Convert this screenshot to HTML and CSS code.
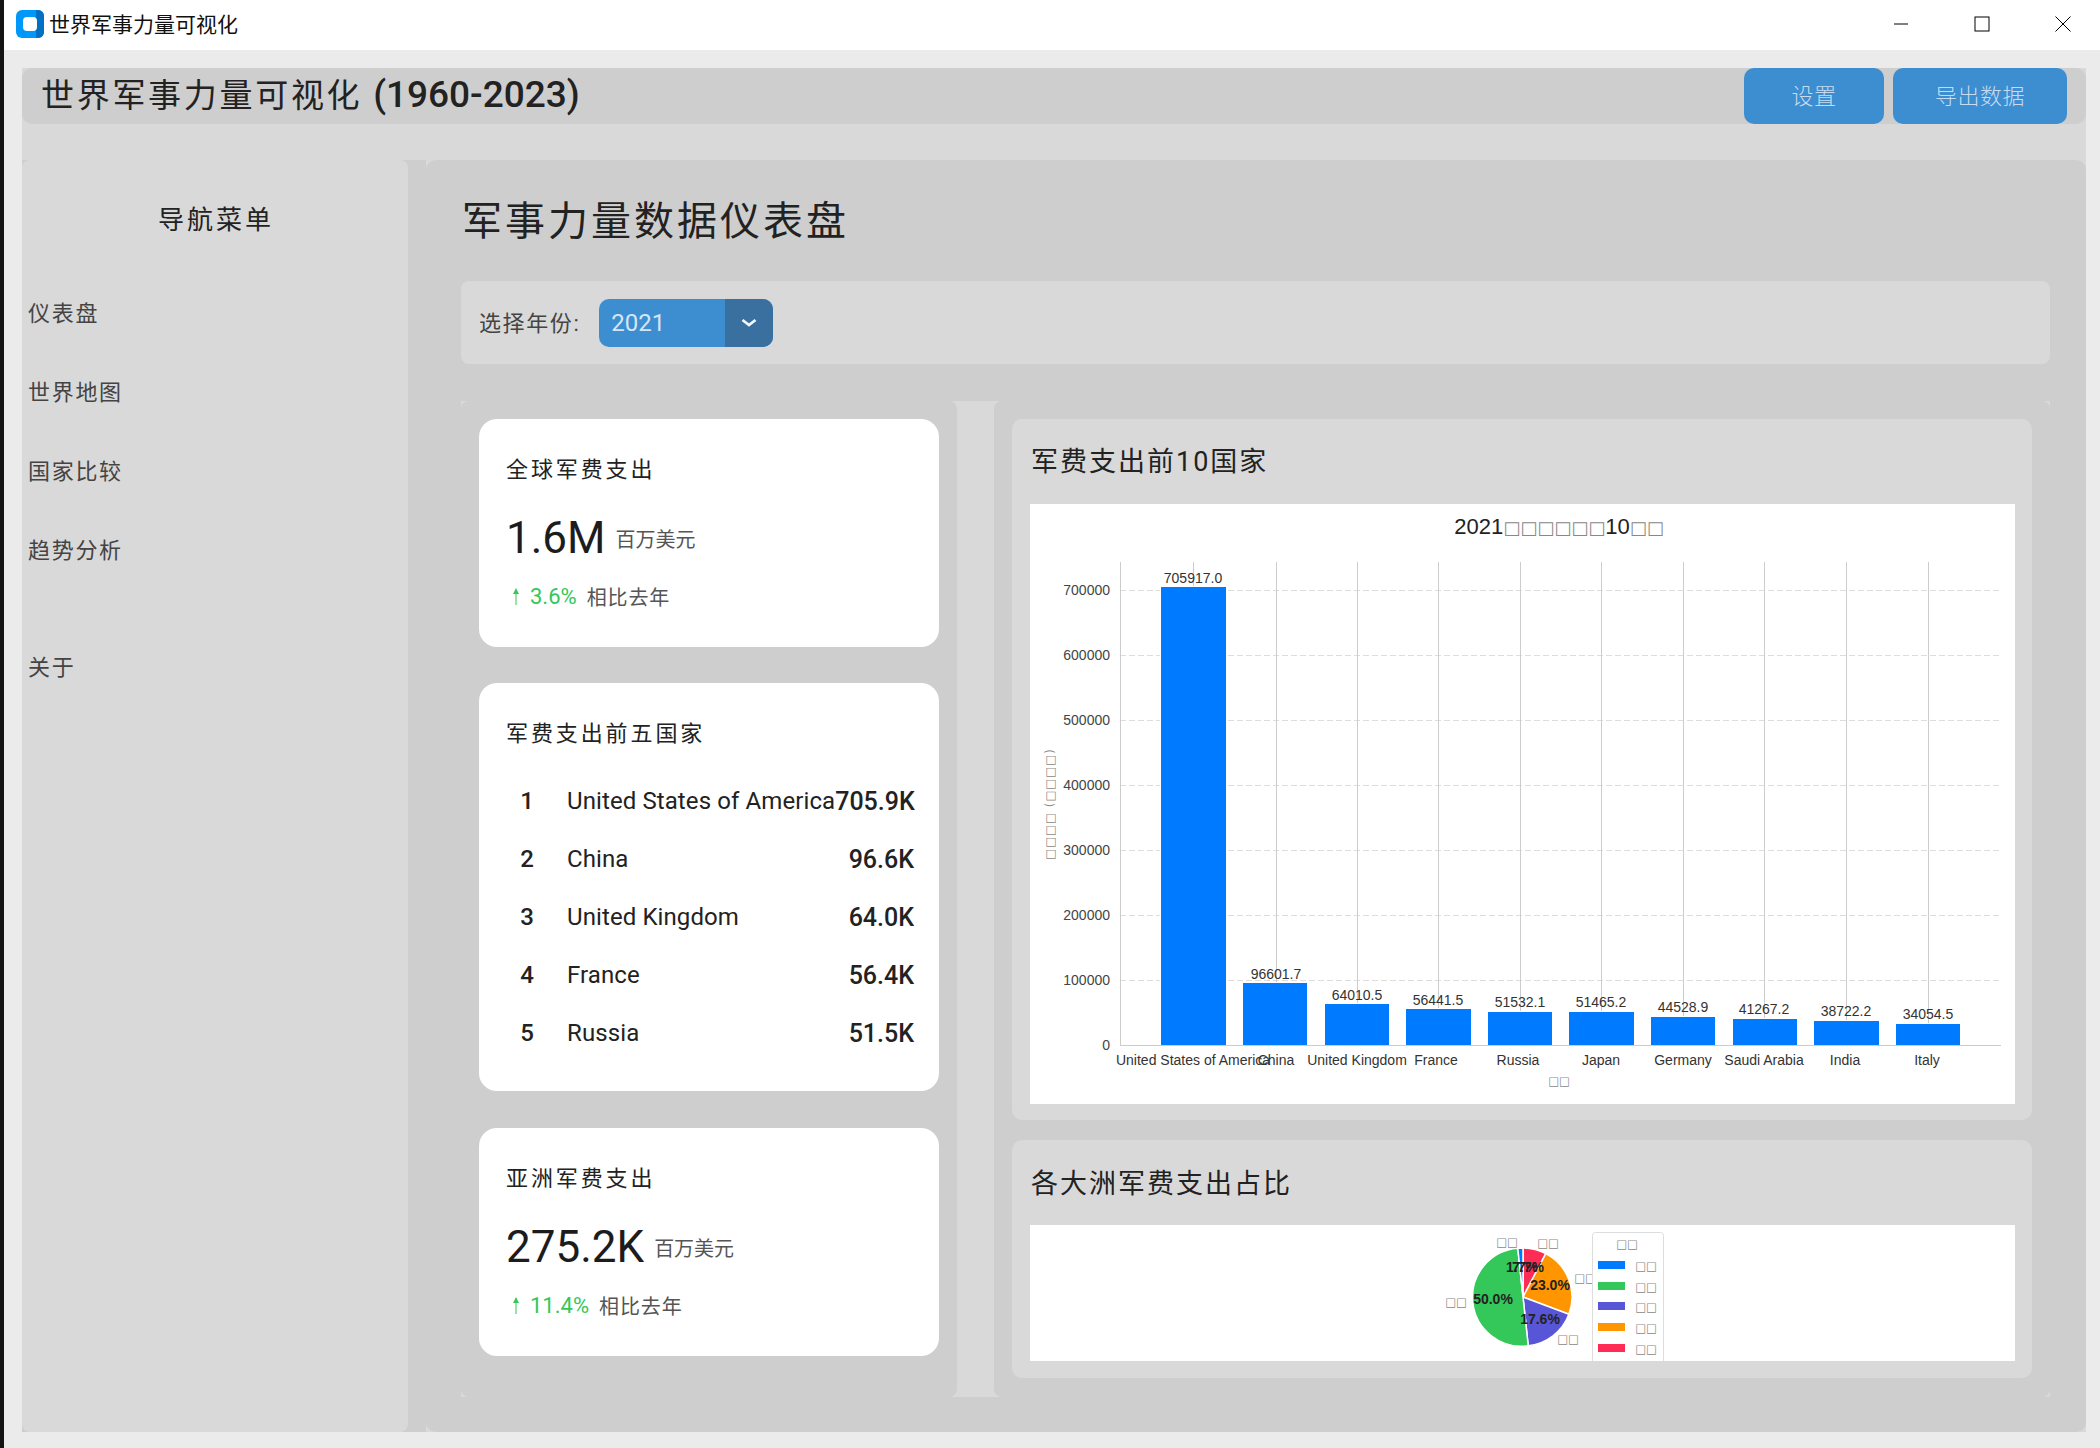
FILE: index.html
```html
<!DOCTYPE html>
<html lang="zh-CN">
<head>
    <meta charset="UTF-8">
    <title>世界军事力量可视化</title>
    <link rel="stylesheet" href="styles.css">
</head>
<body>
    <div class="edge"></div>
    <div class="window">
        <div class="titlebar">
            <svg class="app-icon" width="28" height="28" viewBox="0 0 28 28">
                <rect width="28" height="28" rx="6" fill="#0098f8"/>
                <path d="M22 0a6 6 0 0 1 6 6v16a6 6 0 0 1-6 6h-2V0z" fill="#0070c4"/>
                <rect x="7" y="7" width="14" height="14" rx="4" fill="#fff"/>
            </svg>
            <span class="app-name">世界军事力量可视化</span>
            <div class="win-controls">
                <svg width="16" height="16" viewBox="0 0 16 16"><path d="M1 8h14" stroke="#000" stroke-width="1"/></svg>
                <svg width="16" height="16" viewBox="0 0 16 16"><rect x="1" y="1" width="14" height="14" fill="none" stroke="#000" stroke-width="1"/></svg>
                <svg width="16" height="16" viewBox="0 0 16 16"><path d="M0.500 0.500l15 15M15.500 0.500l-15 15" stroke="#000" stroke-width="1"/></svg>
            </div>
        </div>

        <div class="content">
            <div class="shell">
                <div class="topbar">
                    <h1 class="app-title">世界军事力量可视化 <span>(1960-2023)</span></h1>
                    <div class="top-actions">
                        <button class="btn btn-settings">设置</button>
                        <button class="btn btn-export">导出数据</button>
                    </div>
                </div>

                <div class="body-row">
                    <div class="side-wrap">
                        <nav class="sidebar">
                            <h2 class="side-title">导航菜单</h2>
                            <a class="nav-item">仪表盘</a>
                            <a class="nav-item">世界地图</a>
                            <a class="nav-item">国家比较</a>
                            <a class="nav-item">趋势分析</a>
                            <a class="nav-item nav-about">关于</a>
                        </nav>
                    </div>

                    <main class="main">
                        <h2 class="page-title">军事力量数据仪表盘</h2>

                        <div class="year-bar">
                            <span class="year-label">选择年份:</span>
                            <div class="combo">
                                <span class="combo-value">2021</span>
                                <span class="combo-arrow">
                                    <svg width="16" height="10" viewBox="0 0 16 10"><path d="M1.500 2l6.500 5 6.500-5" fill="none" stroke="#f2f6fa" stroke-width="2.800"/></svg>
                                </span>
                            </div>
                        </div>

                        <div class="panes">
                            <div class="pane pane-left">
                                <section class="card">
                                    <h3 class="card-title">全球军费支出</h3>
                                    <div class="stat-row"><span class="stat-value">1.6M</span><span class="stat-unit">百万美元</span></div>
                                    <div class="change-row">
                                        <svg width="8" height="17" viewBox="0 0 8 17"><path d="M4 0L7 6H4.500V17H3.500V6H1z" fill="#34c759"/></svg>
                                        <span class="change-pct">3.6%</span>
                                        <span class="change-note">相比去年</span>
                                    </div>
                                </section>

                                <section class="card card-list">
                                    <h3 class="card-title">军费支出前五国家</h3>
                                    <ol class="rank-list">
                                        <li><b class="rank">1</b><span class="country">United States of America</span><b class="amount">705.9K</b></li>
                                        <li><b class="rank">2</b><span class="country">China</span><b class="amount">96.6K</b></li>
                                        <li><b class="rank">3</b><span class="country">United Kingdom</span><b class="amount">64.0K</b></li>
                                        <li><b class="rank">4</b><span class="country">France</span><b class="amount">56.4K</b></li>
                                        <li><b class="rank">5</b><span class="country">Russia</span><b class="amount">51.5K</b></li>
                                    </ol>
                                </section>

                                <section class="card card-asia">
                                    <h3 class="card-title">亚洲军费支出</h3>
                                    <div class="stat-row"><span class="stat-value">275.2K</span><span class="stat-unit">百万美元</span></div>
                                    <div class="change-row">
                                        <svg width="8" height="17" viewBox="0 0 8 17"><path d="M4 0L7 6H4.500V17H3.500V6H1z" fill="#34c759"/></svg>
                                        <span class="change-pct">11.4%</span>
                                        <span class="change-note">相比去年</span>
                                    </div>
                                </section>
                            </div>

                            <div class="splitter"></div>

                            <div class="pane pane-right">
                                <section class="chart-card">
                                    <h3 class="chart-title">军费支出前10国家</h3>
                                    <div class="plot plot-bar">
                                        <svg class="chart" width="985" height="600" viewBox="0 0 985 600">
                                            <text class="c-title" x="529" y="30">2021<tspan class="tofu">□□□□□□</tspan>10<tspan class="tofu">□□</tspan></text>

                                            <g class="dash">
                                                <path d="M90 86H971"/><path d="M90 151H971"/><path d="M90 216H971"/><path d="M90 281H971"/>
                                                <path d="M90 346H971"/><path d="M90 411H971"/><path d="M90 476H971"/>
                                            </g>
                                            <g class="vline">
                                                <path d="M163 58V541"/><path d="M246 58V541"/><path d="M327 58V541"/><path d="M408 58V541"/><path d="M490 58V541"/>
                                                <path d="M571 58V541"/><path d="M653 58V541"/><path d="M734 58V541"/><path d="M816 58V541"/><path d="M898 58V541"/>
                                            </g>
                                            <g class="bars">
                                                <rect x="131" y="83" width="65" height="458"/>
                                                <rect x="213" y="479" width="64" height="62"/>
                                                <rect x="295" y="500" width="64" height="41"/>
                                                <rect x="376" y="505" width="65" height="36"/>
                                                <rect x="458" y="508" width="64" height="33"/>
                                                <rect x="539" y="508" width="65" height="33"/>
                                                <rect x="621" y="513" width="64" height="28"/>
                                                <rect x="703" y="515" width="64" height="26"/>
                                                <rect x="784" y="517" width="65" height="24"/>
                                                <rect x="866" y="520" width="64" height="21"/>
                                            </g>
                                            <path class="axis" d="M90 58V541H971"/>

                                            <g class="ticks">
                                                <text x="80" y="91">700000</text><text x="80" y="156">600000</text><text x="80" y="221">500000</text>
                                                <text x="80" y="286">400000</text><text x="80" y="351">300000</text><text x="80" y="416">200000</text>
                                                <text x="80" y="481">100000</text><text x="80" y="546">0</text>
                                            </g>
                                            <g class="vals">
                                                <text x="163" y="79">705917.0</text><text x="246" y="475">96601.7</text><text x="327" y="496">64010.5</text>
                                                <text x="408" y="501">56441.5</text><text x="490" y="503">51532.1</text><text x="571" y="503">51465.2</text>
                                                <text x="653" y="508">44528.9</text><text x="734" y="510">41267.2</text><text x="816" y="512">38722.2</text>
                                                <text x="898" y="515">34054.5</text>
                                            </g>
                                            <g class="cats">
                                                <text x="163" y="561">United States of America</text><text x="246" y="561">China</text><text x="327" y="561">United Kingdom</text>
                                                <text x="406" y="561">France</text><text x="488" y="561">Russia</text><text x="571" y="561">Japan</text>
                                                <text x="653" y="561">Germany</text><text x="734" y="561">Saudi Arabia</text><text x="815" y="561">India</text>
                                                <text x="897" y="561">Italy</text>
                                            </g>
                                            <text class="axis-name" x="529" y="581">□□</text>
                                            <text class="axis-name y-name" transform="translate(24 300) rotate(-90)">□□□□ (□□□□)</text>
                                        </svg>
                                    </div>
                                </section>

                                <section class="chart-card chart-card-pie">
                                    <h3 class="chart-title">各大洲军费支出占比</h3>
                                    <div class="plot plot-pie">
                                        <svg class="chart" width="985" height="136" viewBox="0 0 985 136">
                                            <g class="slices">
                                                <path fill="#ff2d55" d="M493 72L493 23A49 49 0 0 1 515.800 28.600Z"/>
                                                <path fill="#ff9500" d="M493 72L515.800 28.600A49 49 0 0 1 538.900 89.200Z"/>
                                                <path fill="#5856d6" d="M493 72L538.900 89.200A49 49 0 0 1 498.200 120.700Z"/>
                                                <path fill="#34c759" d="M493 72L498.200 120.700A49 49 0 1 1 487.800 23.300Z"/>
                                                <path fill="#007aff" d="M493 72L487.800 23.300A49 49 0 0 1 493 23Z"/>
                                            </g>
                                            <g class="pcts">
                                                <text x="492" y="47">1.7%</text><text x="498" y="47">7.7%</text><text x="520" y="65">23.0%</text>
                                                <text x="510" y="99">17.6%</text><text x="463" y="79">50.0%</text>
                                            </g>
                                            <g class="axis-name">
                                                <text x="477" y="21">□□</text><text x="518" y="22">□□</text><text x="555" y="57">□□</text>
                                                <text x="538" y="118">□□</text><text x="426" y="81">□□</text>
                                            </g>
                                            <rect class="legend-box" x="562.500" y="7.500" width="71" height="140" rx="3"/>
                                            <text class="axis-name" x="597" y="23">□□</text>
                                            <rect x="568" y="36" width="27" height="8" fill="#007aff"/>
                                            <rect x="568" y="57" width="27" height="8" fill="#34c759"/>
                                            <rect x="568" y="77" width="27" height="8" fill="#5856d6"/>
                                            <rect x="568" y="98" width="27" height="8" fill="#ff9500"/>
                                            <rect x="568" y="119" width="27" height="8" fill="#ff2d55"/>
                                            <g class="axis-name">
                                                <text x="616" y="45">□□</text><text x="616" y="66">□□</text><text x="616" y="86">□□</text>
                                                <text x="616" y="107">□□</text><text x="616" y="128">□□</text>
                                            </g>
                                        </svg>
                                    </div>
                                </section>
                            </div>
                        </div>
                    </main>
                </div>
            </div>
        </div>
    </div>
</body>
</html>
```

FILE: styles.css
```css
* { margin: 0; padding: 0; box-sizing: border-box; }

body {
    width: 2100px;
    height: 1448px;
    display: flex;
    overflow: hidden;
    background: #ebebeb;
    color: #222;
    font-family: Roboto, "Noto Sans CJK SC", sans-serif;
}

.edge {
    width: 4px;
    background: #141414;
}

.window {
    flex: 1;
    display: flex;
    flex-direction: column;
    min-width: 0;
}

/* Title bar */
.titlebar {
    height: 50px;
    display: flex;
    align-items: center;
    background: #fff;
    padding: 0 0 2px 12px;
}

.app-name {
    margin: 0 0 2px 5px;
    font-size: 21px;
    color: #111;
    font-family: "Noto Sans CJK SC", sans-serif;
}

.win-controls {
    margin-left: auto;
    display: flex;
    gap: 65px;
    padding-right: 29px;
}

/* Shell */
.content {
    flex: 1;
    padding: 18px 14px 16px 18px;
    display: flex;
    min-height: 0;
}

.shell {
    flex: 1;
    display: flex;
    flex-direction: column;
    min-width: 0;
    background: #d9d9d9;
}

.topbar {
    height: 56px;
    display: flex;
    align-items: center;
    justify-content: space-between;
    padding: 0 19px;
    background: #cecece;
    border-radius: 10px;
}

.app-title {
    font-size: 33px;
    font-weight: 400;
    letter-spacing: 2.7px;
    color: #222;
    padding-bottom: 6px;
}

.app-title span {
    font-size: 37px;
    letter-spacing: 0;
    font-weight: 500;
}

.top-actions {
    display: flex;
    gap: 9px;
    align-self: stretch;
}

.btn {
    border: 0;
    border-radius: 10px;
    background: #3d8dd1;
    color: #c5dcf0;
    font-size: 22px;
    font-weight: 300;
    font-family: inherit;
    letter-spacing: 0.5px;
    padding-bottom: 5px;
}

.btn-settings { width: 140px; }
.btn-export { width: 174px; }

.body-row {
    flex: 1;
    margin-top: 36px;
    display: flex;
    min-height: 0;
}

.side-wrap {
    width: 404px;
    background: #cecece;
}

.sidebar {
    width: 386px;
    height: 100%;
    background: #d9d9d9;
    border-radius: 8px;
    padding: 41px 6px 0;
}

.side-title {
    text-align: center;
    font-size: 26px;
    font-weight: 400;
    letter-spacing: 3px;
    line-height: 38px;
    color: #222;
    margin-bottom: 35px;
    padding-left: 2px;
}

.nav-item {
    display: block;
    height: 79px;
    line-height: 79px;
    font-size: 22px;
    letter-spacing: 1.7px;
    color: #444;
}

.nav-about { margin-top: 38px; }

.main {
    flex: 1;
    min-width: 0;
    background: #cecece;
    border-radius: 10px;
    padding: 0 36px 35px 35px;
    display: flex;
    flex-direction: column;
}

.page-title {
    height: 121px;
    line-height: 123px;
    padding-left: 1px;
    font-size: 40px;
    font-weight: 400;
    letter-spacing: 3px;
    color: #222;
}

.year-bar {
    height: 83px;
    display: flex;
    align-items: center;
    gap: 19px;
    padding-left: 18px;
    background: #d9d9d9;
    border-radius: 8px;
}

.year-label {
    font-size: 22px;
    letter-spacing: 1.6px;
    color: #444;
    padding-bottom: 4px;
}

.combo {
    width: 174px;
    height: 48px;
    display: flex;
    background: #3d8dd1;
    border-radius: 10px;
    overflow: hidden;
}

.combo-value {
    flex: 1;
    padding-left: 12px;
    line-height: 48px;
    font-size: 24px;
    color: #d4e6f6;
}

.combo-arrow {
    width: 48px;
    display: flex;
    align-items: center;
    justify-content: center;
    background: #3a70a0;
}

.panes {
    flex: 1;
    margin-top: 37px;
    display: flex;
    min-height: 0;
    background: #d9d9d9;
}

.pane {
    background: #cecece;
    border-radius: 8px;
    padding: 18px 18px 0;
}

.pane-left { width: 496px; }

.pane-right {
    flex: 1;
    min-width: 0;
}

.splitter { width: 37px; }

/* Left cards */
.card {
    background: #fff;
    border-radius: 18px;
    padding: 33px 25px 0 27px;
    height: 228px;
    margin-bottom: 36px;
}

.card-list {
    height: 408px;
    margin-bottom: 37px;
}

.card-title {
    font-size: 22px;
    font-weight: 400;
    letter-spacing: 2.9px;
    line-height: 36px;
    color: #222;
}

.stat-row {
    margin-top: 25px;
    height: 50px;
    display: flex;
    align-items: center;
    gap: 10px;
}

.stat-value {
    font-size: 44px;
    color: #1c1c1e;
}

.stat-unit {
    font-size: 20px;
    color: #555;
}

.change-row {
    margin-top: 19px;
    height: 28px;
    display: flex;
    align-items: center;
    padding-left: 6px;
    font-size: 22px;
}

.change-pct {
    margin-left: 10px;
    color: #34c759;
}

.change-note {
    margin-left: 10px;
    font-size: 20px;
    letter-spacing: 0.9px;
    color: #555;
}

.rank-list {
    list-style: none;
    margin-top: 20px;
}

.rank-list li {
    height: 58px;
    display: flex;
    align-items: center;
    font-size: 24px;
}

.rank {
    width: 34px;
    margin: 0 23px 0 4px;
    text-align: center;
    font-weight: 500;
    flex: none;
}

.country {
    flex: 1;
    white-space: nowrap;
    letter-spacing: 0.1px;
}

.amount {
    font-size: 25px;
    font-weight: 500;
    flex: none;
}

/* Charts */
.chart-card {
    background: #d9d9d9;
    border-radius: 10px;
    padding: 23px 17px 16px 18px;
    margin-bottom: 20px;
}

.chart-card-pie {
    padding-top: 24px;
    padding-bottom: 17px;
    margin-bottom: 0;
}

.chart-title {
    height: 40px;
    line-height: 40px;
    padding-left: 1px;
    font-size: 27px;
    font-weight: 400;
    letter-spacing: 2px;
    color: #222;
    margin-bottom: 22px;
}

.chart-card-pie .chart-title { margin-bottom: 21px; }

.plot { background: #fff; }
.plot-bar { height: 600px; }
.plot-pie { height: 136px; }

.chart {
    display: block;
    font-family: "Liberation Sans", "DejaVu Sans", sans-serif;
    font-size: 14px;
}

.c-title {
    font-size: 22px;
    text-anchor: middle;
    fill: #222;
}

.tofu {
    font-family: "DejaVu Sans", sans-serif;
    font-size: 18px;
    fill: #888;
}

.dash path {
    stroke: #ddd;
    stroke-width: 1;
    stroke-dasharray: 6 3;
    fill: none;
    shape-rendering: crispEdges;
}

.vline path {
    stroke: #ccc;
    stroke-width: 1;
    shape-rendering: crispEdges;
}

.bars rect {
    fill: #007aff;
    stroke: #fff;
    stroke-width: 2;
    paint-order: stroke;
}

.axis {
    stroke: #ccc;
    stroke-width: 1;
    fill: none;
    shape-rendering: crispEdges;
}

.ticks text {
    text-anchor: end;
    fill: #444;
}

.vals text,
.cats text {
    text-anchor: middle;
    fill: #333;
}

.axis-name,
.axis-name text {
    font-family: "DejaVu Sans", sans-serif;
    font-size: 11.500px;
    fill: #888;
    text-anchor: middle;
}

.y-name { letter-spacing: 1.1px; }

.slices path {
    stroke: #fff;
    stroke-width: 1.500;
}

.pcts text {
    font-weight: 700;
    text-anchor: middle;
    fill: #222;
}

.legend-box {
    fill: #fff;
    stroke: #ddd;
    stroke-width: 1;
}
```
